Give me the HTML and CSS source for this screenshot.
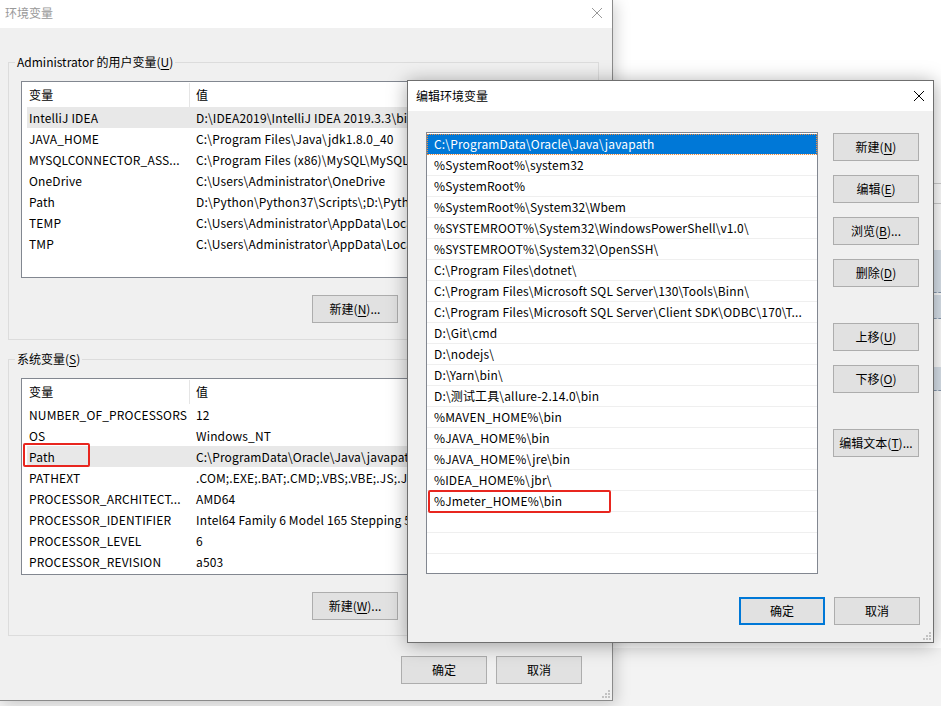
FILE: index.html
```html
<!DOCTYPE html>
<html lang="zh-CN">

<head>
	<meta charset="UTF-8">
	<title>编辑环境变量</title>
	<link rel="stylesheet" href="styles.css">
</head>

<body>
	<!-- 后面那个窗口露出来的一点 -->
	<div class="peek">
		<div class="peek-line" style="top: 8px"></div>
		<div class="peek-line" style="top: 28px"></div>
		<div class="peek-sel" style="top: 75px; height: 43px"></div>
		<div class="peek-sel" style="top: 120px; height: 24px"></div>
		<div class="peek-sel" style="top: 192px; height: 24px"></div>
	</div>

	<!-- 环境变量 -->
	<div class="win win-env">
		<div class="titlebar">
			<span class="title">环境变量</span>
			<svg class="close" width="10" height="10" viewBox="0 0 10 10">
				<path d="M0 0L10 10M10 0L0 10" stroke="#999" stroke-width="1" />
			</svg>
		</div>

		<div class="env-body">
			<div class="group">
				<span class="group-label">Administrator 的用户变量(<u>U</u>)</span>
				<div class="list">
					<div class="list-head"><span class="col-name">变量</span><span class="col-val">值</span></div>
					<div class="row row-sel"><span class="col-name">IntelliJ IDEA</span><span class="col-val">D:\IDEA2019\IntelliJ IDEA 2019.3.3\bin;</span></div>
					<div class="row"><span class="col-name">JAVA_HOME</span><span class="col-val">C:\Program Files\Java\jdk1.8.0_40</span></div>
					<div class="row"><span class="col-name">MYSQLCONNECTOR_ASS...</span><span class="col-val">C:\Program Files (x86)\MySQL\MySQL Connector C 6.1\</span></div>
					<div class="row"><span class="col-name">OneDrive</span><span class="col-val">C:\Users\Administrator\OneDrive</span></div>
					<div class="row"><span class="col-name">Path</span><span class="col-val">D:\Python\Python37\Scripts\;D:\Python\Python37\;</span></div>
					<div class="row"><span class="col-name">TEMP</span><span class="col-val">C:\Users\Administrator\AppData\Local\Temp</span></div>
					<div class="row"><span class="col-name">TMP</span><span class="col-val">C:\Users\Administrator\AppData\Local\Temp</span></div>
				</div>
				<div class="group-actions">
					<button class="btn">新建(<u>N</u>)...</button>
				</div>
			</div>

			<div class="group group-sys">
				<span class="group-label">系统变量(<u>S</u>)</span>
				<div class="list">
					<div class="list-head"><span class="col-name">变量</span><span class="col-val">值</span></div>
					<div class="row"><span class="col-name">NUMBER_OF_PROCESSORS</span><span class="col-val">12</span></div>
					<div class="row"><span class="col-name">OS</span><span class="col-val">Windows_NT</span></div>
					<div class="row row-sel"><span class="col-name">Path</span><span class="col-val">C:\ProgramData\Oracle\Java\javapath;%SystemRoot%\system32;</span><span class="mark mark-path"></span></div>
					<div class="row"><span class="col-name">PATHEXT</span><span class="col-val">.COM;.EXE;.BAT;.CMD;.VBS;.VBE;.JS;.JSE;.WSF;.WSH;.MSC</span></div>
					<div class="row"><span class="col-name">PROCESSOR_ARCHITECT...</span><span class="col-val">AMD64</span></div>
					<div class="row"><span class="col-name">PROCESSOR_IDENTIFIER</span><span class="col-val">Intel64 Family 6 Model 165 Stepping 5, GenuineIntel</span></div>
					<div class="row"><span class="col-name">PROCESSOR_LEVEL</span><span class="col-val">6</span></div>
					<div class="row"><span class="col-name">PROCESSOR_REVISION</span><span class="col-val">a503</span></div>
				</div>
				<div class="group-actions">
					<button class="btn">新建(<u>W</u>)...</button>
				</div>
			</div>

			<div class="env-actions">
				<button class="btn">确定</button>
				<button class="btn">取消</button>
			</div>
		</div>

		<svg class="grip" width="8" height="8" viewBox="0 0 8 8">
			<path d="M6 0h2v2h-2zM3 3h2v2h-2zM6 3h2v2h-2zM0 6h2v2h-2zM3 6h2v2h-2zM6 6h2v2h-2z" fill="#c2c2c2" />
		</svg>
	</div>

	<!-- 编辑环境变量 -->
	<div class="win win-edit">
		<div class="titlebar">
			<span class="title">编辑环境变量</span>
			<svg class="close" width="10" height="10" viewBox="0 0 10 10">
				<path d="M0 0L10 10M10 0L0 10" stroke="#000" stroke-width="1" />
			</svg>
		</div>

		<div class="edit-body">
			<div class="path-list">
				<div class="path-row path-sel">C:\ProgramData\Oracle\Java\javapath</div>
				<div class="path-row">%SystemRoot%\system32</div>
				<div class="path-row">%SystemRoot%</div>
				<div class="path-row">%SystemRoot%\System32\Wbem</div>
				<div class="path-row">%SYSTEMROOT%\System32\WindowsPowerShell\v1.0\</div>
				<div class="path-row">%SYSTEMROOT%\System32\OpenSSH\</div>
				<div class="path-row">C:\Program Files\dotnet\</div>
				<div class="path-row">C:\Program Files\Microsoft SQL Server\130\Tools\Binn\</div>
				<div class="path-row">C:\Program Files\Microsoft SQL Server\Client SDK\ODBC\170\T...</div>
				<div class="path-row">D:\Git\cmd</div>
				<div class="path-row">D:\nodejs\</div>
				<div class="path-row">D:\Yarn\bin\</div>
				<div class="path-row">D:\测试工具\allure-2.14.0\bin</div>
				<div class="path-row">%MAVEN_HOME%\bin</div>
				<div class="path-row">%JAVA_HOME%\bin</div>
				<div class="path-row">%JAVA_HOME%\jre\bin</div>
				<div class="path-row">%IDEA_HOME%\jbr\</div>
				<div class="path-row">%Jmeter_HOME%\bin<span class="mark mark-jmeter"></span></div>
				<div class="path-row"></div>
				<div class="path-row"></div>
				<div class="path-row"></div>
			</div>

			<div class="side">
				<button class="btn">新建(<u>N</u>)</button>
				<button class="btn">编辑(<u>E</u>)</button>
				<button class="btn">浏览(<u>B</u>)...</button>
				<button class="btn">删除(<u>D</u>)</button>
				<button class="btn sep">上移(<u>U</u>)</button>
				<button class="btn">下移(<u>O</u>)</button>
				<button class="btn sep">编辑文本(<u>T</u>)...</button>
			</div>
		</div>

		<div class="edit-foot">
			<button class="btn btn-default">确定</button>
			<button class="btn">取消</button>
		</div>

		<svg class="grip" width="8" height="8" viewBox="0 0 8 8">
			<path d="M6 0h2v2h-2zM3 3h2v2h-2zM6 3h2v2h-2zM0 6h2v2h-2zM3 6h2v2h-2zM6 6h2v2h-2z" fill="#c2c2c2" />
		</svg>
	</div>
</body>

</html>
```

FILE: styles.css
```css
* {
	box-sizing: border-box;
}

body {
	margin: 0;
	width: 941px;
	height: 706px;
	overflow: hidden;
	position: relative;
	font-family: "Noto Sans CJK SC", "Noto Sans", sans-serif;
	font-size: 12px;
	line-height: 16px;
	color: #000;
	background: linear-gradient(#fff 0 648px, #f3f3f3 648px);
}

u {
	text-decoration-thickness: 1px;
	text-underline-offset: 2px;
}

/* 窗口 */
.win {
	position: absolute;
	background: #f0f0f0;
}

.titlebar {
	display: flex;
	align-items: center;
	justify-content: space-between;
	background: #fff;
}

.grip {
	position: absolute;
	right: 2px;
	bottom: 2px;
}

.btn {
	width: 86px;
	height: 28px;
	padding: 0;
	font: inherit;
	color: #000;
	background: #e1e1e1;
	border: 1px solid #adadad;
}

.btn-default {
	border: 2px solid #0078d7;
}

.mark {
	position: absolute;
	border: 2px solid #e8261f;
	border-radius: 2px;
}

/* 环境变量 */
.win-env {
	left: 0;
	top: 0;
	width: 613px;
	height: 701px;
	border-right: 1px solid #8a8a8a;
	border-bottom: 1px solid #8a8a8a;
	box-shadow: 3px 3px 14px rgba(0, 0, 0, 0.18);
}

.win-env .titlebar {
	height: 28px;
	padding: 0 10px 3px 5px;
}

.win-env .title {
	color: #999;
}

.env-body {
	padding: 34px 13px 0 8px;
}

.group {
	position: relative;
	border: 1px solid #dcdcdc;
	padding: 18px 11px 16px 12px;
}

.group-sys {
	margin-top: 19px;
	padding-bottom: 15px;
}

.group-label {
	position: absolute;
	top: -9px;
	left: 6px;
	padding: 0 2px;
	background: #f0f0f0;
}

/* 列表右边被上面的对话框挡住了 */
.list {
	width: 386px;
	height: 197px;
	overflow: hidden;
	background: #fff;
	border: 1px solid #828790;
	border-right: 0;
	letter-spacing: 0.15px;
}

.list-head {
	display: flex;
	align-items: center;
	height: 25px;
}

.list-head .col-name {
	width: 168px;
	padding-left: 7px;
	border-right: 1px solid #e5e5e5;
	line-height: 24px;
}

.row {
	position: relative;
	display: flex;
	align-items: center;
	height: 21px;
	margin-left: 5px;
}

.row .col-name {
	width: 163px;
	flex: none;
	padding-left: 2px;
}

.col-name,
.col-val {
	white-space: nowrap;
	overflow: hidden;
}

.col-val {
	flex: 1;
	padding-left: 6px;
}

.row-sel {
	background: #e8e8e8;
}

.mark-path {
	left: -4px;
	top: -3px;
	width: 67px;
	height: 24px;
}

.group-actions {
	display: flex;
	margin-top: 17px;
	padding-left: 291px;
}

.env-actions {
	display: flex;
	justify-content: flex-end;
	gap: 9px;
	margin-top: 20px;
	padding-right: 17px;
}

/* 编辑环境变量 */
.win-edit {
	left: 407px;
	top: 80px;
	width: 527px;
	height: 563px;
	border: 1px solid #6f6f6f;
	box-shadow: 0 2px 18px rgba(0, 0, 0, 0.35);
}

.win-edit .titlebar {
	height: 30px;
	padding: 0 9px 0 8px;
}

.edit-body {
	display: flex;
	padding: 21px 13px 0 18px;
}

.path-list {
	width: 392px;
	height: 442px;
	padding-top: 1px;
	overflow: hidden;
	background: #fff;
	border: 1px solid #828790;
	letter-spacing: 0.15px;
}

.path-row {
	position: relative;
	height: 21px;
	padding-left: 7px;
	line-height: 20px;
	white-space: nowrap;
	border-bottom: 1px solid #efefef;
}

.path-sel {
	color: #fff;
	background: #0078d7;
	outline: 1px dotted #f08a3c;
	outline-offset: -1px;
}

.mark-jmeter {
	left: 1px;
	top: -1px;
	width: 183px;
	height: 23px;
}

.side {
	display: flex;
	flex-direction: column;
	margin-left: 15px;
}

.side .btn {
	margin-top: 14px;
}

.side .btn:first-child {
	margin-top: 1px;
}

.side .btn.sep {
	margin-top: 36px;
}

.edit-foot {
	display: flex;
	justify-content: flex-end;
	gap: 9px;
	padding: 23px 13px 0 0;
}

/* 右边再后面一个窗口 */
.peek {
	position: absolute;
	left: 934px;
	top: 175px;
	width: 7px;
	height: 240px;
}

.peek-line {
	position: absolute;
	left: 0;
	right: 0;
	border-top: 1px solid #cfcfcf;
}

.peek-sel {
	position: absolute;
	left: 0;
	right: 0;
	background: #dae3ec;
	border-bottom: 1px dashed #8a9bb0;
}
```
